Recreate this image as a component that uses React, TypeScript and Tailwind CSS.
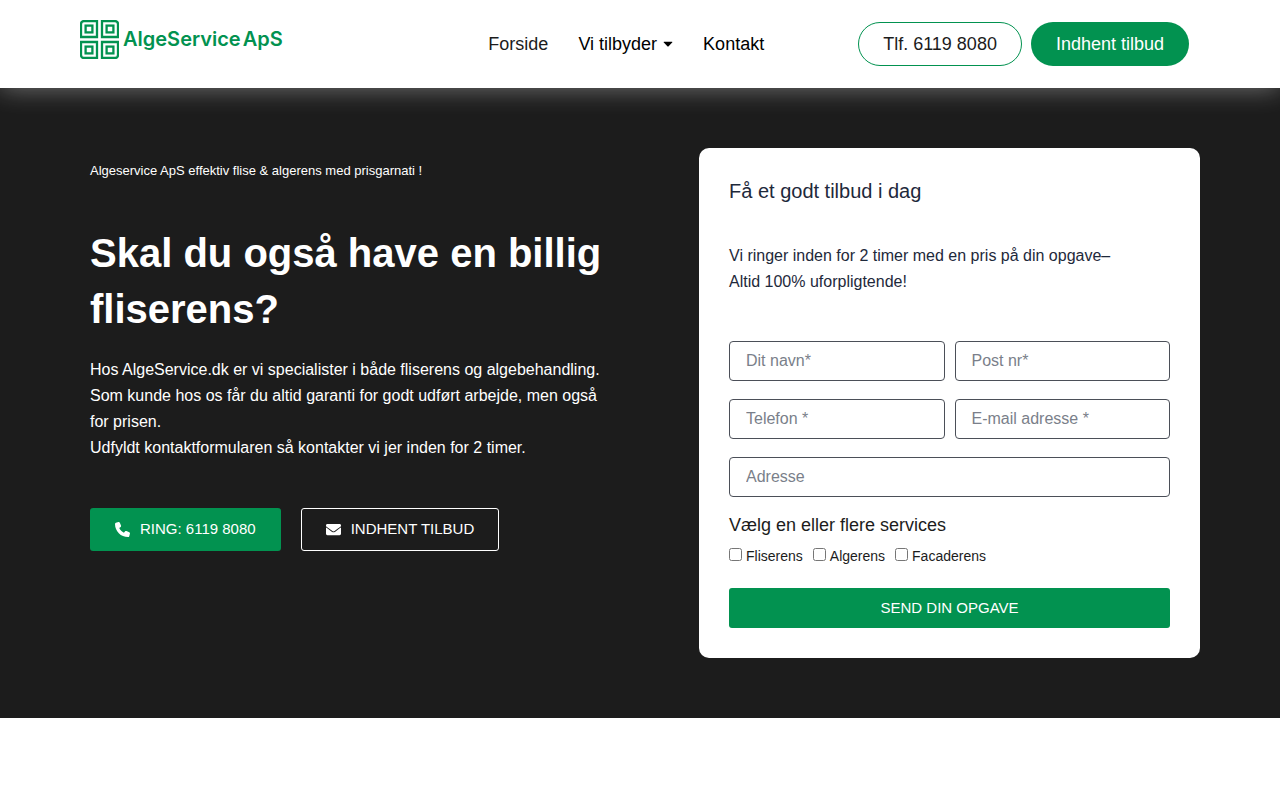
import type { ReactNode } from "react";
import { FaCaretDown, FaEnvelope } from "react-icons/fa";
import { FaPhone } from "react-icons/fa6";

interface FieldProps {
  id: string;
  label: string;
  type?: string;
  wide?: boolean;
}

const services = ["Fliserens", "Algerens", "Facaderens"];

const fields: FieldProps[] = [
  { id: "name", label: "Dit navn*" },
  { id: "zip", label: "Post nr*" },
  { id: "phone", label: "Telefon *", type: "tel" },
  { id: "email", label: "E-mail adresse *", type: "email" },
  { id: "address", label: "Adresse", wide: true },
];

const Tile = ({ x, y, d }: { x: number; y: number; d: string }) => (
  <g transform={`translate(${x} ${y})`}>
    <path d={d} />
    <rect x="5.6" y="5.6" width="6.8" height="6.8" />
  </g>
);

const Logo = () => (
  <a href="#" className="flex items-center gap-1 text-[#029250]">
    <svg width="39" height="39" viewBox="0 0 39 39" fill="none" stroke="currentColor" strokeWidth="2.3" aria-hidden="true">
      <Tile x={0} y={0} d="M17 1v16H1V4a3 3 0 0 1 3-3z" />
      <Tile x={21} y={0} d="M1 1h13a3 3 0 0 1 3 3v13H1z" />
      <Tile x={0} y={21} d="M1 1h16v16H4a3 3 0 0 1-3-3z" />
      <Tile x={21} y={21} d="M1 1h16v13a3 3 0 0 1-3 3H1z" />
    </svg>
    <span className="flex gap-0.5 font-[Inter,sans-serif] text-xl font-semibold leading-6">
      <span>AlgeService</span>
      <span>ApS</span>
    </span>
  </a>
);

const Field = ({ id, label, type = "text", wide }: FieldProps) => (
  <input
    id={id}
    name={id}
    type={type}
    aria-label={label}
    placeholder={label}
    className={`block h-10 w-full rounded border border-[#4b4f58] bg-white px-4 text-base text-[#1e293b] placeholder:text-[#7a7f8a] ${wide ? "col-span-2" : ""}`}
  />
);

const NavLink = ({ children }: { children: ReactNode }) => (
  <a href="#" className="flex items-center gap-1.5">
    {children}
  </a>
);

const Header = () => (
  <header className="relative bg-white shadow-[0_0_25px_rgba(255,255,255,0.4)]">
    <div className="mx-auto flex h-22 max-w-[1120px] items-center">
      <div className="flex-1 pb-2.5">
        <Logo />
      </div>
      <nav className="mr-[94px] flex gap-[30px] text-lg text-black">
        <NavLink>
          <span className="text-[#1c1c1c]">Forside</span>
        </NavLink>
        <NavLink>
          Vi tilbyder
          <FaCaretDown className="mb-0.5 h-[15px] w-2.5" />
        </NavLink>
        <NavLink>Kontakt</NavLink>
      </nav>
      <div className="flex gap-[9px] pr-[11px] text-lg">
        <a href="tel:61198080" className="flex h-11 items-center rounded-full border border-[#029250] px-6 text-[#1c1c1c]">
          Tlf. 6119 8080
        </a>
        <a href="#tilbud" className="flex h-11 items-center rounded-full bg-[#029250] px-[25px] text-white">
          Indhent tilbud
        </a>
      </div>
    </div>
  </header>
);

const QuoteForm = () => (
  <form id="tilbud" className="w-[501px] shrink-0 rounded-[10px] bg-white p-[30px]">
    <h2 className="text-xl leading-[26px] text-[#1e293b]">Få et godt tilbud i dag</h2>
    <p className="mt-[39px] text-base leading-[26px] text-[#1e293b]">
      Vi ringer inden for 2 timer med en pris på din opgave–
      <br />
      Altid 100% uforpligtende!
    </p>
    <div className="mt-[46px] grid grid-cols-2 gap-x-2.5 gap-y-[18px]">
      {fields.map((field) => (
        <Field key={field.id} {...field} />
      ))}
    </div>
    <fieldset className="mt-3.5">
      <legend className="text-lg text-[#1c1c1c]">Vælg en eller flere services</legend>
      <div className="mt-[7px] flex gap-2.5 text-sm text-[#1c1c1c]">
        {services.map((service) => (
          <label key={service} className="flex items-center gap-1">
            <input type="checkbox" className="mb-1 size-[13px]" />
            {service}
          </label>
        ))}
      </div>
    </fieldset>
    <button type="submit" className="mt-[22px] h-10 w-full rounded-[3px] bg-[#029250] text-[15px] text-white">
      SEND DIN OPGAVE
    </button>
  </form>
);

const Hero = () => (
  <section className="bg-[#1c1c1c] py-15 text-white">
    <div className="mx-auto flex max-w-[1120px] items-start justify-between">
      <div className="max-w-[540px] px-2.5 pt-[13px]">
        <p className="text-[13px] leading-5">Algeservice ApS effektiv flise &amp; algerens med prisgarnati !</p>
        <h1 className="mt-11 text-[40px] font-bold leading-14">Skal du også have en billig fliserens?</h1>
        <p className="mt-5 text-base leading-[26px]">
          Hos AlgeService.dk er vi specialister i både fliserens og algebehandling. Som kunde hos os får du altid
          garanti for godt udført arbejde, men også for prisen.
          <br />
          Udfyldt kontaktformularen så kontakter vi jer inden for 2 timer.
        </p>
        <div className="mt-[47px] flex gap-5 text-[15px]">
          <a href="tel:61198080" className="flex h-[43px] items-center gap-2.5 rounded-[3px] bg-[#029250] px-[25px]">
            <FaPhone size={15} />
            RING: 6119 8080
          </a>
          <a href="#tilbud" className="flex h-[43px] items-center gap-2.5 rounded-[3px] border border-white px-6">
            <FaEnvelope size={15} />
            INDHENT TILBUD
          </a>
        </div>
      </div>
      <QuoteForm />
    </div>
  </section>
);

export default function App() {
  return (
    <div className="min-h-screen bg-white font-['Liberation_Sans',Arial,sans-serif]">
      <Header />
      <main>
        <Hero />
      </main>
    </div>
  );
}
